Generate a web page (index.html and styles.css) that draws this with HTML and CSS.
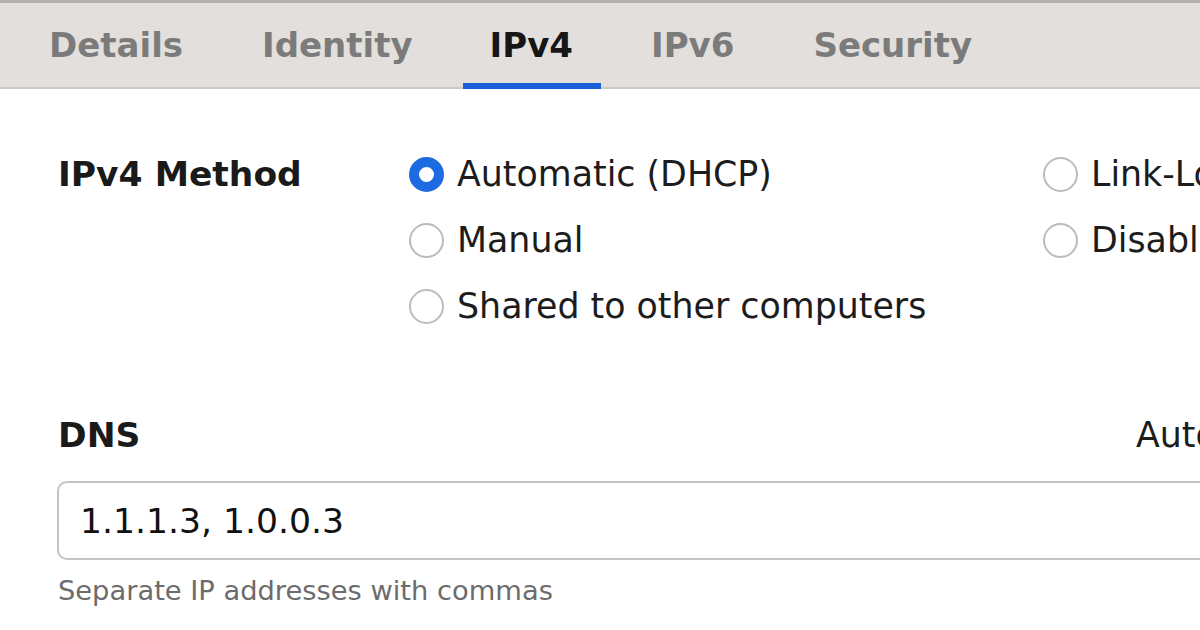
FILE: index.html
```html
<!DOCTYPE html>
<html lang="en">
<head>
<meta charset="utf-8">
<title>IPv4 Settings</title>
<link rel="stylesheet" href="styles.css">
</head>
<body>
<nav class="tabs">
  <div class="tab">Details</div>
  <div class="tab">Identity</div>
  <div class="tab active">IPv4</div>
  <div class="tab">IPv6</div>
  <div class="tab">Security</div>
</nav>
<main class="content">
  <section class="method">
    <div class="label">IPv4 Method</div>
    <div class="radio-col col1">
      <div class="radio"><span class="dot checked"></span><span>Automatic (DHCP)</span></div>
      <div class="radio"><span class="dot"></span><span>Manual</span></div>
      <div class="radio"><span class="dot"></span><span>Shared to other computers</span></div>
    </div>
    <div class="radio-col">
      <div class="radio"><span class="dot"></span><span>Link-Local Only</span></div>
      <div class="radio"><span class="dot"></span><span>Disabled</span></div>
    </div>
  </section>
  <section class="dns">
    <div class="dns-head">
      <div class="label">DNS</div>
      <div class="auto">Automatic</div>
    </div>
    <div class="entry">1.1.1.3, 1.0.0.3</div>
    <div class="hint">Separate IP addresses with commas</div>
  </section>
</main>
</body>
</html>
```
FILE: styles.css
```css
html, body {
  margin: 0;
  padding: 0;
}
body {
  width: 1200px;
  height: 630px;
  overflow: hidden;
  background: #ffffff;
  font-family: "DejaVu Sans", "Liberation Sans", sans-serif;
  color: #1c1c1c;
}
.tabs {
  display: flex;
  gap: 21px;
  height: 86px;
  padding: 0 0 0 20px;
  border-top: 3px solid #b3b0ad;
  background: #e2dfdc;
  box-shadow: inset 0 -2px 0 #ccc8c4;
  box-sizing: content-box;
}
.tab {
  display: flex;
  align-items: center;
  padding: 0 29px 2px;
  font-size: 34px;
  font-weight: bold;
  color: #7b7b7b;
  white-space: nowrap;
}
.tab.active {
  color: #161616;
  padding: 0 28px 2px 27px;
  box-shadow: inset 0 -6px 0 #1b5fd8;
}
.content {
  width: 1400px;
  padding: 52px 0 0 58px;
  box-sizing: border-box;
}
.method {
  display: flex;
}
.label {
  font-size: 34.5px;
  font-weight: bold;
  color: #1a1a1a;
  white-space: nowrap;
}
.method > .label {
  width: 351px;
  height: 66px;
  display: flex;
  align-items: center;
}
.radio-col {
  display: flex;
  flex-direction: column;
}
.col1 {
  width: 634px;
}
.radio {
  display: flex;
  align-items: center;
  gap: 13px;
  height: 66px;
  font-size: 34.8px;
  white-space: nowrap;
}
.dot {
  width: 35px;
  height: 35px;
  border-radius: 50%;
  box-sizing: border-box;
  border: 2px solid #bdbcbb;
  background: #ffffff;
  flex: none;
}
.dot.checked {
  border: 10px solid #1c6be0;
}
.dns {
  margin-top: 71px;
}
.dns-head {
  display: flex;
  align-items: center;
  height: 50px;
}
.dns-head .label {
  width: 1078px;
}
.auto {
  font-size: 34.8px;
  white-space: nowrap;
}
.entry {
  margin-top: 21px;
  margin-left: -1px;
  height: 79px;
  box-sizing: border-box;
  border: 2px solid #c6c4c2;
  border-radius: 10px;
  display: flex;
  align-items: center;
  padding-left: 21px;
  font-size: 34.6px;
  color: #111111;
}
.hint {
  margin-top: 15px;
  font-size: 27.3px;
  line-height: 32px;
  color: #6c6c6c;
}
```
